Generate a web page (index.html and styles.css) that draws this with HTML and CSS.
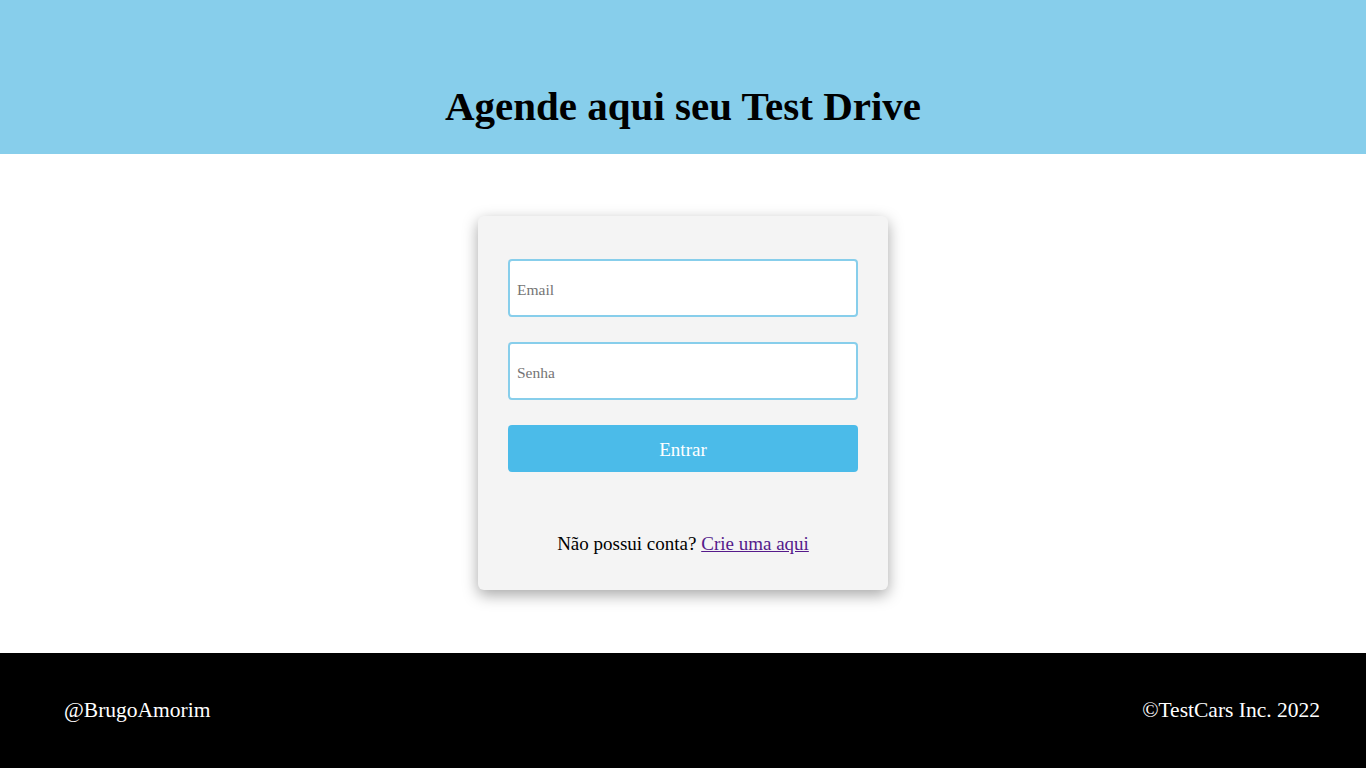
FILE: index.html
```html
<!DOCTYPE html>
<html lang="pt-BR">
<head>
<meta charset="utf-8">
<title>Test Drive</title>
<link rel="stylesheet" href="styles.css">
</head>
<body>
<header class="topo">
  <h1 class="titulo">Agende aqui seu Test Drive</h1>
</header>
<main class="conteudo">
  <form class="cartao">
    <input class="campo" type="email" placeholder="Email">
    <input class="campo" type="password" placeholder="Senha">
    <button class="botao" type="button">Entrar</button>
    <p class="cadastro">Não possui conta? <a class="link" href="#">Crie uma aqui</a></p>
  </form>
</main>
<footer class="rodape">
  <span class="rodape-texto">@BrugoAmorim</span>
  <span class="rodape-texto">©TestCars Inc. 2022</span>
</footer>
</body>
</html>
```
FILE: styles.css
```css
* { box-sizing: border-box; }
html, body { margin: 0; padding: 0; }
body {
  font-family: "Liberation Serif", "Times New Roman", serif;
  width: 1366px;
  height: 768px;
  display: flex;
  flex-direction: column;
}
.topo {
  background: #87ceeb;
  height: 154px;
  display: flex;
  align-items: flex-end;
  justify-content: center;
  padding-bottom: 26px;
}
.titulo {
  margin: 0;
  font-size: 41px;
  font-weight: bold;
  line-height: 44px;
  color: #000;
}
.conteudo {
  height: 499px;
  background: #fff;
  display: flex;
  justify-content: center;
  padding-top: 62px;
}
.cartao {
  width: 410px;
  height: 374px;
  background: #f4f4f4;
  border-radius: 6px;
  box-shadow: 0 5px 15px rgba(0,0,0,0.35);
  padding: 43px 30px 0;
  display: flex;
  flex-direction: column;
}
.campo {
  width: 350px;
  height: 58px;
  flex: none;
  border: 2px solid #87ceeb;
  border-radius: 4px;
  background: #fff;
  padding: 3px 7px 0;
  font-family: "Liberation Serif", serif;
  font-size: 15.5px;
  margin-bottom: 25px;
  outline: none;
}
.campo::placeholder { color: #757575; }
.botao {
  width: 350px;
  height: 47px;
  flex: none;
  border: none;
  border-radius: 4px;
  background: #4bbbe9;
  color: #fff;
  font-family: "Liberation Serif", serif;
  font-size: 19px;
  padding: 3px 0 0;
}
.cadastro {
  margin: 60px 0 0;
  text-align: center;
  font-size: 19px;
  line-height: 24px;
  color: #000;
}
.link { color: #551a8b; }
.rodape {
  flex: 1;
  background: #000;
  color: #fff;
  display: flex;
  justify-content: space-between;
  align-items: center;
  padding: 0 46px 0 64px;
}
.rodape-texto {
  font-size: 21.5px;
}
```
